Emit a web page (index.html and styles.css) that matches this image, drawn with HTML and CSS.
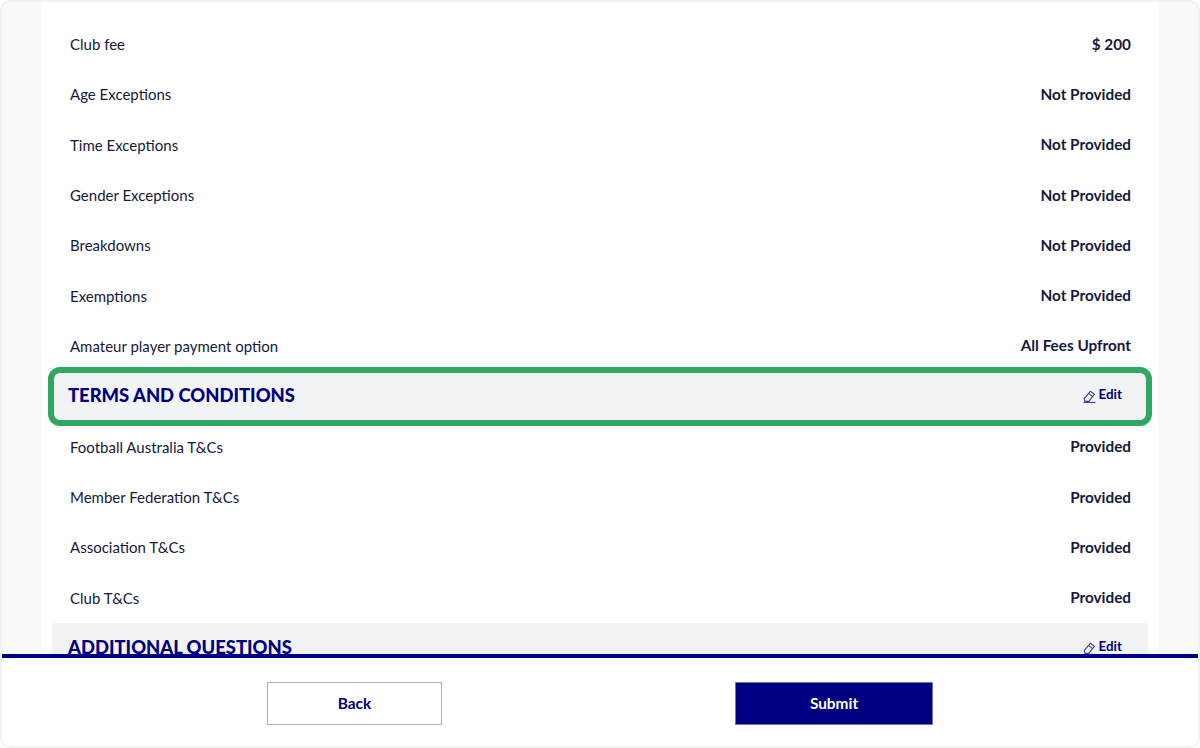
FILE: index.html
```html
<!DOCTYPE html>
<html>
<head>
    <title>Review registration</title>
    <link rel="stylesheet" href="styles.css">
</head>
<body>
    <div class="frame">
        <!-- scrolled content -->
        <div class="scroll-area">
            <div class="summary">
                <div class="row"><span class="label">Club fee</span><span class="value">$ 200</span></div>
                <div class="row"><span class="label">Age Exceptions</span><span class="value">Not Provided</span></div>
                <div class="row"><span class="label">Time Exceptions</span><span class="value">Not Provided</span></div>
                <div class="row"><span class="label">Gender Exceptions</span><span class="value">Not Provided</span></div>
                <div class="row"><span class="label">Breakdowns</span><span class="value">Not Provided</span></div>
                <div class="row"><span class="label">Exemptions</span><span class="value">Not Provided</span></div>
                <div class="row"><span class="label">Amateur player payment option</span><span class="value">All Fees Upfront</span></div>

                <div class="section highlighted">
                    <h3>TERMS AND CONDITIONS</h3>
                    <a class="edit" href="#">
                        <svg width="13" height="14" viewBox="0 0 13 14" fill="none" stroke="#3d3d94" stroke-width="1.1">
                            <path d="M1.2 9.6 L7.4 2.2 L11.4 5.4 L5.8 12.4 H2 Z"/>
                            <path d="M5.6 4.4 L9.6 7.6"/>
                            <path d="M0.5 13.4 H12.5"/>
                        </svg>
                        Edit
                    </a>
                </div>

                <div class="row"><span class="label">Football Australia T&amp;Cs</span><span class="value">Provided</span></div>
                <div class="row"><span class="label">Member Federation T&amp;Cs</span><span class="value">Provided</span></div>
                <div class="row"><span class="label">Association T&amp;Cs</span><span class="value">Provided</span></div>
                <div class="row"><span class="label">Club T&amp;Cs</span><span class="value">Provided</span></div>

                <div class="section">
                    <h3>ADDITIONAL QUESTIONS</h3>
                    <a class="edit" href="#">
                        <svg width="13" height="14" viewBox="0 0 13 14" fill="none" stroke="#3d3d94" stroke-width="1.1">
                            <path d="M1.2 9.6 L7.4 2.2 L11.4 5.4 L5.8 12.4 H2 Z"/>
                            <path d="M5.6 4.4 L9.6 7.6"/>
                            <path d="M0.5 13.4 H12.5"/>
                        </svg>
                        Edit
                    </a>
                </div>
            </div>
        </div>

        <!-- bottom buttons -->
        <div class="footer">
            <button class="btn btn-back">Back</button>
            <button class="btn btn-submit">Submit</button>
        </div>
    </div>
</body>
</html>
```

FILE: styles.css
```css
html, body {
    margin: 0;
    padding: 0;
    height: 100%;
    background-color: #FFFFFF;
    font-family: Lato, "Open Sans", Arial, sans-serif;
}

.frame {
    box-sizing: border-box;
    height: 748px;
    display: flex;
    flex-direction: column;
    border: 2px solid #F1F1F6;
    border-radius: 10px;
    overflow: hidden;
    background-color: #F9F9FB;
}

.scroll-area {
    flex: 1;
    min-height: 0;
    overflow: hidden;
    padding: 0 40px;
}

.summary {
    background-color: #FFFFFF;
    padding: 17px 10px 0;
    height: 100%;
    box-sizing: border-box;
}

.row {
    display: flex;
    justify-content: space-between;
    align-items: center;
    height: 50.3px;
    padding: 0 17px 0 18px;
    font-size: 15px;
    color: #14193C;
}

.value {
    font-size: 15.3px;
    font-weight: 700;
    padding-bottom: 1px;
}

.section {
    position: relative;
    box-sizing: border-box;
    display: flex;
    justify-content: space-between;
    align-items: center;
    height: 50.5px;
    padding: 0 26px 3px 16px;
    background-color: #F2F3F5;
    color: #000080;
}

.section h3 {
    margin: 0;
    font-size: 18.4px;
    font-weight: 900;
}

.highlighted::after {
    content: "";
    position: absolute;
    top: -4px;
    right: -4px;
    bottom: -4px;
    left: -4px;
    border: 6px solid #2FA85F;
    border-radius: 12px;
}

.edit {
    display: flex;
    align-items: flex-start;
    gap: 3px;
    font-size: 13.4px;
    font-weight: 700;
    color: #000080;
    text-decoration: none;
}

.edit svg {
    margin-top: 3px;
}

.footer {
    display: flex;
    align-items: center;
    height: 85px;
    flex-shrink: 0;
    padding: 3px 0 0 265px;
    gap: 293px;
    border-top: 4px solid #000080;
    background-color: #FFFFFF;
}

.btn {
    height: 43px;
    padding: 0 0 2px;
    font-family: Lato, "Open Sans", Arial, sans-serif;
    font-size: 15.4px;
    font-weight: 700;
    border-radius: 0;
    cursor: pointer;
}

.btn-back {
    width: 175px;
    background-color: #FFFFFF;
    border: 1px solid #A9A9D6;
    color: #000080;
}

.btn-submit {
    width: 198px;
    background-color: #000080;
    border: 1px solid #7070B8;
    color: #FFFFFF;
}
```
